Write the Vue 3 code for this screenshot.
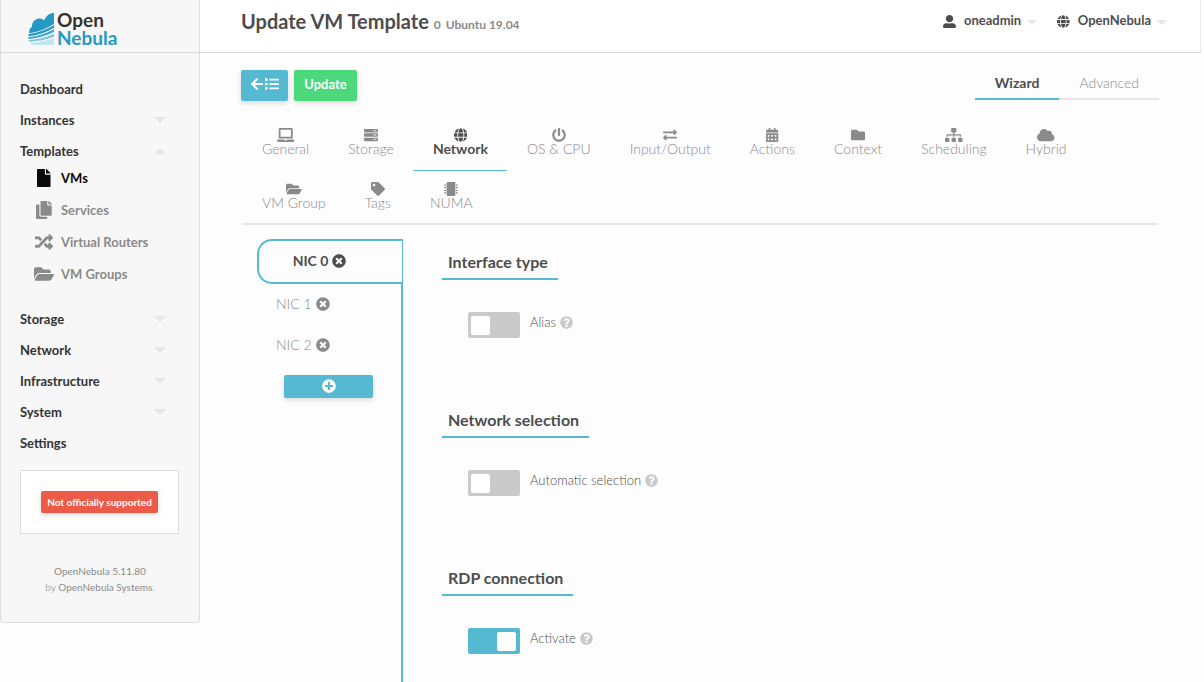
<script setup>
import { ref } from 'vue'

const icons = {
  file: [384, 'M224 136V0H24C10.7 0 0 10.7 0 24v464c0 13.3 10.7 24 24 24h336c13.3 0 24-10.7 24-24V160H248c-13.2 0-24-10.8-24-24zm160-14.1v6.1H256V0h6.1c6.4 0 12.5 2.5 17 7l97.9 98c4.5 4.5 7 10.6 7 16.9z'],
  copy: [448, 'M320 448v40c0 13.255-10.745 24-24 24H24c-13.255 0-24-10.745-24-24V120c0-13.255 10.745-24 24-24h72v296c0 30.879 25.121 56 56 56h168zm0-344V0H152c-13.255 0-24 10.745-24 24v368c0 13.255 10.745 24 24 24h272c13.255 0 24-10.745 24-24V128H344c-13.2 0-24-10.8-24-24zm120.971-31.029L375.029 7.029A24 24 0 0 0 358.059 0H352v96h96v-6.059a24 24 0 0 0-7.029-16.97z'],
  random: [512, 'M504.971 359.029c9.373 9.373 9.373 24.569 0 33.941l-80 79.984c-15.01 15.01-40.971 4.49-40.971-16.971V416h-58.785a12.004 12.004 0 0 1-8.773-3.812l-70.556-75.596 53.333-57.143L352 336h32v-39.981c0-21.438 25.943-31.998 40.971-16.971l80 79.981zM12 176h84l52.781 56.551 53.333-57.143-70.556-75.596A11.999 11.999 0 0 0 122.785 96H12c-6.627 0-12 5.373-12 12v56c0 6.627 5.373 12 12 12zm372 0v39.984c0 21.46 25.961 31.98 40.971 16.971l80-79.984c9.373-9.373 9.373-24.569 0-33.941l-80-79.981C409.943 24.021 384 34.582 384 56.019V96h-58.785a12.004 12.004 0 0 0-8.773 3.812L96 336H12c-6.627 0-12 5.373-12 12v56c0 6.627 5.373 12 12 12h110.785c3.326 0 6.503-1.381 8.773-3.812L352 176h32z'],
  folderOpen: [576, 'M572.694 292.093L500.27 416.248A63.997 63.997 0 0 1 444.989 448H45.025c-18.523 0-30.064-20.093-20.731-36.093l72.424-124.155A64 64 0 0 1 152 256h399.964c18.523 0 30.064 20.093 20.73 36.093zM152 224h328v-48c0-26.51-21.49-48-48-48H272l-64-64H48C21.49 64 0 85.49 0 112v278.046l69.077-118.418C86.214 242.25 117.989 224 152 224z'],
  user: [512, 'M256 288c79.5 0 144-64.5 144-144S335.5 0 256 0 112 64.5 112 144s64.5 144 144 144zm128 32h-55.1c-22.2 10.2-46.9 16-72.9 16s-50.6-5.8-72.9-16H128c-70.7 0-128 57.3-128 128v16c0 26.5 21.5 48 48 48h416c26.5 0 48-21.5 48-48v-16c0-70.7-57.3-128-128-128z'],
  globe: [496, 'M336.5 160C322 70.7 287.8 8 248 8s-74 62.7-88.5 152h177zM152 256c0 22.2 1.2 43.5 3.3 64h185.3c2.1-20.5 3.3-41.8 3.3-64s-1.2-43.5-3.3-64H155.3c-2.1 20.5-3.3 41.8-3.3 64zm324.7-96c-28.6-67.9-86.5-120.4-158-141.6 24.4 33.8 41.2 84.7 50 141.6h108zM177.2 18.4C105.8 39.6 47.8 92.1 19.3 160h108c8.7-56.9 25.5-107.8 49.9-141.6zM487.4 192H372.7c2.1 21 3.3 42.5 3.3 64s-1.2 43-3.3 64h114.6c5.5-20.5 8.6-41.8 8.6-64s-3.1-43.5-8.5-64zM120 256c0-21.5 1.2-43 3.3-64H8.6C3.2 212.5 0 233.8 0 256s3.2 43.5 8.6 64h114.6c-2-21-3.2-42.5-3.2-64zm39.5 96c14.5 89.3 48.7 152 88.5 152s74-62.7 88.5-152h-177zm159.3 141.6c71.4-21.2 129.4-73.7 158-141.6h-108c-8.8 56.9-25.6 107.8-50 141.6zM19.3 352c28.6 67.9 86.5 120.4 158 141.6-24.4-33.8-41.2-84.7-50-141.6h-108z'],
  laptop: [640, 'M624 416H381.54c-.74 19.81-14.71 32-32.74 32H288c-18.69 0-33.02-17.47-32.77-32H16c-8.8 0-16 7.2-16 16v16c0 35.2 28.8 64 64 64h512c35.2 0 64-28.8 64-64v-16c0-8.8-7.2-16-16-16zM576 48c0-26.4-21.6-48-48-48H112C85.6 0 64 21.6 64 48v336h512V48zm-64 272H128V64h384v256z'],
  server: [512, [0, 160, 320].map(y => `M480 ${160 + y}H32c-17.7 0-32-14.3-32-32v-64c0-17.7 14.3-32 32-32h448c17.7 0 32 14.3 32 32v64c0 17.7-14.3 32-32 32zm-48-88a24 24 0 1 0 0 48a24 24 0 1 0 0-48zm-64 0a24 24 0 1 0 0 48a24 24 0 1 0 0-48z`).join('')],
  power: [512, 'M400 54.1c63 45 104 118.6 104 201.9 0 136.8-110.8 247.7-247.5 248C120 504.3 8.2 393 8 256.4 7.9 173.1 48.9 99.3 111.8 54.2c11.7-8.3 28-4.8 35 7.7L162.6 90c5.9 10.5 3.1 23.8-6.6 31-41.5 30.8-68 79.6-68 134.9-.1 92.3 74.5 168.1 168 168.1 91.6 0 168.6-74.2 168-169.1-.3-51.8-24.7-101.8-68.1-134-9.7-7.2-12.4-20.5-6.5-30.9l15.8-28.1c7-12.4 23.2-16.1 34.8-7.8zM296 264V24c0-13.3-10.7-24-24-24h-32c-13.3 0-24 10.7-24 24v240c0 13.3 10.7 24 24 24h32c13.3 0 24-10.7 24-24z'],
  exchange: [512, 'M0 168v-16c0-13.255 10.745-24 24-24h360V80c0-21.367 25.899-32.042 40.971-16.971l80 80c9.372 9.373 9.372 24.569 0 33.941l-80 80C409.956 271.982 384 261.456 384 240v-48H24c-13.255 0-24-10.745-24-24zm488 152H128v-48c0-21.314-25.862-32.08-40.971-16.971l-80 80c-9.372 9.373-9.372 24.569 0 33.941l80 80C102.057 463.997 128 453.437 128 432v-48h360c13.255 0 24-10.745 24-24v-16c0-13.255-10.745-24-24-24z'],
  calendar: [448, 'M0 464c0 26.5 21.5 48 48 48h352c26.5 0 48-21.5 48-48V192H0zM400 64h-48V16c0-8.8-7.2-16-16-16h-32c-8.8 0-16 7.2-16 16v48H160V16c0-8.8-7.2-16-16-16h-32c-8.8 0-16 7.2-16 16v48H48C21.5 64 0 85.5 0 112v48h448v-48c0-26.5-21.5-48-48-48z' + [[64, 256], [192, 256], [320, 256], [64, 384], [192, 384], [320, 384]].map(([x, y]) => `M${x} ${y}h64v64h-64z`).join('')],
  folder: [512, 'M464 128H272l-64-64H48C21.49 64 0 85.49 0 112v288c0 26.51 21.49 48 48 48h416c26.51 0 48-21.49 48-48V176c0-26.51-21.49-48-48-48z'],
  sitemap: [640, 'M128 352H32c-17.67 0-32 14.33-32 32v96c0 17.67 14.33 32 32 32h96c17.67 0 32-14.33 32-32v-96c0-17.67-14.33-32-32-32zm-24-80h192v48h48v-48h192v48h48v-57.59c0-21.17-17.23-38.41-38.41-38.41H344v-64h40c17.67 0 32-14.33 32-32V32c0-17.67-14.33-32-32-32H256c-17.67 0-32 14.33-32 32v96c0 17.67 14.33 32 32 32h40v64H94.41C73.23 224 56 241.23 56 262.41V320h48v-48zm264 80h-96c-17.67 0-32 14.33-32 32v96c0 17.67 14.33 32 32 32h96c17.67 0 32-14.33 32-32v-96c0-17.67-14.33-32-32-32zm240 0h-96c-17.67 0-32 14.33-32 32v96c0 17.67 14.33 32 32 32h96c17.67 0 32-14.33 32-32v-96c0-17.67-14.33-32-32-32z'],
  cloud: [640, 'M537.6 226.6c4.1-10.7 6.4-22.4 6.4-34.6 0-53-43-96-96-96-19.7 0-38.1 6-53.3 16.2C367 64.2 315.3 32 256 32c-88.4 0-160 71.6-160 160 0 2.7.1 5.4.2 8.1C40.2 219.8 0 273.2 0 336c0 79.5 64.5 144 144 144h368c70.7 0 128-57.3 128-128 0-61.9-44-113.6-102.4-125.4z'],
  tag: [512, 'M0 252.118V48C0 21.49 21.49 0 48 0h204.118a48 48 0 0 1 33.941 14.059l211.882 211.882c18.745 18.745 18.745 49.137 0 67.882L293.823 497.941c-18.745 18.745-49.137 18.745-67.882 0L14.059 286.059A48 48 0 0 1 0 252.118zM112 64c-26.51 0-48 21.49-48 48s21.49 48 48 48 48-21.49 48-48-21.49-48-48-48z'],
  chip: [512, 'M416 48v416c0 26.51-21.49 48-48 48H144c-26.51 0-48-21.49-48-48V48c0-26.51 21.49-48 48-48h224c26.51 0 48 21.49 48 48z' + [88, 184, 280, 376].map(y => `M440 ${y}h48v12h24v24h-24v12h-48zM72 ${y}h-48v12h-24v24h24v12h48z`).join('')],
  times: [512, 'M256 8C119 8 8 119 8 256s111 248 248 248 248-111 248-248S393 8 256 8zm121.6 313.1c4.7 4.7 4.7 12.3 0 17L338 377.6c-4.7 4.7-12.3 4.7-17 0L256 312l-65.1 65.6c-4.7 4.7-12.3 4.7-17 0L134.4 338c-4.7-4.7-4.7-12.3 0-17l65.6-65-65.6-65.1c-4.7-4.7-4.7-12.3 0-17l39.6-39.6c4.7-4.7 12.3-4.7 17 0l65 65.7 65.1-65.6c4.7-4.7 12.3-4.7 17 0l39.6 39.6c4.7 4.7 4.7 12.3 0 17L312 256l65.6 65.1z'],
  plus: [512, 'M256 8C119 8 8 119 8 256s111 248 248 248 248-111 248-248S393 8 256 8zm144 276c0 6.6-5.4 12-12 12h-92v92c0 6.6-5.4 12-12 12h-56c-6.6 0-12-5.4-12-12v-92h-92c-6.6 0-12-5.4-12-12v-56c0-6.6 5.4-12 12-12h92v-92c0-6.6 5.4-12 12-12h56c6.6 0 12 5.4 12 12v92h92c6.6 0 12 5.4 12 12v56z'],
  question: [512, 'M504 256c0 136.997-111.043 248-248 248S8 392.997 8 256C8 119.083 119.043 8 256 8s248 111.083 248 248zM262.655 90c-54.497 0-89.255 22.957-116.549 63.758-3.536 5.286-2.353 12.415 2.715 16.258l34.699 26.31c5.205 3.947 12.621 3.008 16.665-2.122 17.864-22.658 30.113-35.797 57.303-35.797 20.429 0 45.698 13.148 45.698 32.958 0 14.976-12.363 22.667-32.534 33.976C247.128 238.528 216 254.941 216 296v4c0 6.627 5.373 12 12 12h56c6.627 0 12-5.373 12-12v-1.333c0-28.462 83.186-29.647 83.186-106.667 0-58.002-60.165-102-116.531-102zM256 338c-25.365 0-46 20.635-46 46 0 25.364 20.635 46 46 46s46-20.636 46-46c0-25.365-20.635-46-46-46z'],
  arrow: [448, 'M257.5 445.1l-22.2 22.2c-9.4 9.4-24.6 9.4-33.9 0L7 273c-9.4-9.4-9.4-24.6 0-33.9L201.4 44.7c9.4-9.4 24.6-9.4 33.9 0l22.2 22.2c9.5 9.5 9.3 25-.4 34.3L136.6 216H424c13.3 0 24 10.7 24 24v32c0 13.3-10.7 24-24 24H136.6l120.5 114.8c9.8 9.3 10 24.8.4 34.3z'],
  list: [512, [0, 160, 320].map(y => `M16 ${48 + y}h64a16 16 0 0 1 16 16v64a16 16 0 0 1-16 16h-64a16 16 0 0 1-16-16v-64a16 16 0 0 1 16-16zM176 ${64 + y}h320a16 16 0 0 1 16 16v32a16 16 0 0 1-16 16h-320a16 16 0 0 1-16-16v-32a16 16 0 0 1 16-16z`).join('')]
}

const viewBox = name => `0 0 ${icons[name][0]} 512`

const menu = [
  { label: 'Dashboard' },
  { label: 'Instances', arrow: 'down' },
  {
    label: 'Templates',
    arrow: 'up',
    children: [
      { label: 'VMs', icon: 'file', active: true },
      { label: 'Services', icon: 'copy' },
      { label: 'Virtual Routers', icon: 'random' },
      { label: 'VM Groups', icon: 'folderOpen' }
    ]
  },
  { label: 'Storage', arrow: 'down' },
  { label: 'Network', arrow: 'down' },
  { label: 'Infrastructure', arrow: 'down' },
  { label: 'System', arrow: 'down' },
  { label: 'Settings' }
]

const tabs = [
  ['General', 'laptop'], ['Storage', 'server'], ['Network', 'globe'], ['OS & CPU', 'power'],
  ['Input/Output', 'exchange'], ['Actions', 'calendar'], ['Context', 'folder'],
  ['Scheduling', 'sitemap'], ['Hybrid', 'cloud'], ['VM Group', 'folderOpen'],
  ['Tags', 'tag'], ['NUMA', 'chip']
]
const activeTab = ref('Network')
const nics = ['NIC 0', 'NIC 1', 'NIC 2']
const activeNic = ref('NIC 0')

const sections = ref([
  { title: 'Interface type', label: 'Alias', id: 'alias', on: false },
  { title: 'Network selection', label: 'Automatic selection', id: 'auto-selection', on: false },
  { title: 'RDP connection', label: 'Activate', id: 'rdp', on: true }
])
</script>

<template>
  <div class="page">
    <aside class="sidebar">
      <a class="logo" href="#">
        <svg class="logo-mark" viewBox="0 0 78 96" aria-hidden="true">
          <path fill="#2499c4" d="M78 0v32C56 47 30 57 4 61C2 50 8 43 12 42C10 23 31 8 49 22C55 6 66 0 78 0z" />
          <path fill="#2499c4" d="M78 36v8C54 59 28 67 1 70q0-4 2-7C30 59 56 50 78 36z" />
          <path fill="#41a7cd" d="M78 49v8C52 70 27 76 1 78V73C28 71 54 62 78 49z" />
          <path fill="#7dc6e0" d="M78 62v9C52 80 30 84 6 86q-4-2-5-5C27 80 52 74 78 62z" />
          <path fill="#c2e5f1" d="M78 76v20H18Q9 95 6 89C31 88 55 84 78 76z" />
        </svg>
        <span class="logo-text">Open<br><span class="logo-blue">Nebula</span></span>
      </a>
      <nav>
        <ul class="menu">
          <li v-for="item in menu" :key="item.label">
            <a class="menu-link" href="#">{{ item.label }}<i v-if="item.arrow" class="caret" :class="item.arrow"></i></a>
            <ul v-if="item.children" class="submenu">
              <li v-for="child in item.children" :key="child.label">
                <a class="sub-link" :class="{ active: child.active }" href="#">
                  <span class="sub-icon"><svg :viewBox="viewBox(child.icon)"><path :d="icons[child.icon][1]" /></svg></span>
                  {{ child.label }}
                </a>
              </li>
            </ul>
          </li>
        </ul>
      </nav>
      <div class="support"><span class="support-label">Not officially supported</span></div>
      <div class="footer">
        <div><a href="#">OpenNebula 5.11.80</a></div>
        <div>by <a href="#">OpenNebula Systems</a>.</div>
      </div>
    </aside>

    <div class="content">
      <header class="header">
        <h1>Update VM Template <small>0</small><small>Ubuntu 19.04</small></h1>
        <div class="header-menus">
          <button class="header-btn" type="button">
            <svg :viewBox="viewBox('user')"><path :d="icons.user[1]" /></svg><span>oneadmin</span><i class="caret small down"></i>
          </button>
          <button class="header-btn" type="button">
            <svg :viewBox="viewBox('globe')"><path :d="icons.globe[1]" /></svg><span>OpenNebula</span><i class="caret small down"></i>
          </button>
        </div>
      </header>

      <main class="main">
        <div class="toolbar">
          <div class="actions">
            <button class="btn back" type="button" aria-label="Back to list">
              <svg :viewBox="viewBox('arrow')"><path :d="icons.arrow[1]" /></svg>
              <svg :viewBox="viewBox('list')"><path :d="icons.list[1]" /></svg>
            </button>
            <button class="btn update" type="button">Update</button>
          </div>
          <div class="modes">
            <button class="mode active" type="button">Wizard</button>
            <button class="mode" type="button">Advanced</button>
          </div>
        </div>

        <div class="tabs">
          <button v-for="[label, icon] in tabs" :key="label" type="button" class="tab" :class="{ active: label === activeTab }" @click="activeTab = label">
            <svg :viewBox="viewBox(icon)"><path fill-rule="evenodd" :d="icons[icon][1]" /></svg>
            <span>{{ label }}</span>
          </button>
        </div>

        <div class="panel">
          <div class="nics">
            <div v-for="nic in nics" :key="nic" class="nic" :class="{ active: nic === activeNic }">
              <button type="button" class="nic-name" @click="activeNic = nic">{{ nic }}</button>
              <button type="button" class="nic-remove" :aria-label="'Remove ' + nic">
                <svg :viewBox="viewBox('times')"><path :d="icons.times[1]" /></svg>
              </button>
            </div>
            <button class="add" type="button" aria-label="Add NIC">
              <svg :viewBox="viewBox('plus')"><path :d="icons.plus[1]" /></svg>
            </button>
          </div>
          <div class="form">
            <section v-for="section in sections" :key="section.id" class="section">
              <h2>{{ section.title }}</h2>
              <div class="field">
                <input :id="section.id" v-model="section.on" class="switch" type="checkbox">
                <label :for="section.id">{{ section.label }}</label>
                <svg class="help" :viewBox="viewBox('question')"><path fill-rule="evenodd" :d="icons.question[1]" /></svg>
              </div>
            </section>
          </div>
        </div>
      </main>
    </div>
  </div>
</template>

<style>
body {
  background: #fdfdfd;
  overflow: hidden;
}
</style>

<style scoped>
* {
  box-sizing: border-box;
}
.page {
  display: flex;
  align-items: flex-start;
  height: 100vh;
  overflow: hidden;
  padding-right: 3px;
  font-family: Lato, "Open Sans", sans-serif;
  font-size: 14px;
  color: #4d4d4d;
}
button {
  border: 0;
  padding: 0;
  background: none;
  font: inherit;
  color: inherit;
  cursor: pointer;
}
a {
  color: inherit;
  text-decoration: none;
}
svg {
  display: block;
  fill: currentColor;
  height: 14px;
}
ul {
  list-style: none;
  margin: 0;
  padding: 0;
}

.sidebar {
  flex: none;
  width: 200px;
  border: 1px solid #dedede;
  border-top: 0;
  border-radius: 0 0 4px 4px;
  background: #f7f7f7;
}
.logo {
  display: flex;
  align-items: center;
  gap: 3px;
  height: 53px;
  padding: 6px 0 0 27px;
  border-bottom: 1px solid #d8d8d8;
}
.logo-mark {
  width: 26px;
  height: 32px;
}
.logo-text {
  font-size: 19px;
  font-weight: 700;
  line-height: 18px;
  color: #333;
}
.logo-blue {
  color: #2499c4;
}
.menu {
  padding: 20px 20px 0 19px;
}
.menu-link {
  display: flex;
  align-items: center;
  justify-content: space-between;
  height: 31px;
  padding-right: 13px;
  font-size: 13px;
  font-weight: 700;
  color: #333;
}
.caret {
  border: 6px solid transparent;
  border-bottom-width: 0;
  border-top-color: #e6e6e6;
}
.caret.up {
  border-bottom: 6px solid #e6e6e6;
  border-top: 0;
}
.caret.small {
  border-width: 5px 5px 0;
  margin: 2px 0 0 6px;
}
.submenu {
  margin-top: -4px;
  padding-bottom: 13px;
}
.sub-link {
  display: flex;
  align-items: center;
  gap: 7px;
  height: 32px;
  padding-left: 14px;
  font-size: 13px;
  font-weight: 700;
  color: #8a8a8a;
}
.sub-icon {
  display: flex;
  justify-content: center;
  width: 20px;
}
.sub-icon svg {
  height: 18px;
}
.sub-link.active {
  color: #0a0a0a;
}
.support {
  display: flex;
  justify-content: center;
  margin: 12px 20px 0 19px;
  padding: 20px 0;
  border: 1px solid #dedede;
  background: #fff;
}
.support-label {
  padding: 0 6px;
  border-radius: 2px;
  background: #ec5b48;
  box-shadow: 0 2px 5px rgba(0, 0, 0, 0.15);
  font-size: 10px;
  font-weight: 700;
  line-height: 22px;
  color: #fff;
}
.footer {
  padding: 29px 0 27px;
  text-align: center;
  font-size: 10px;
  line-height: 16px;
  color: #b0b0b0;
}
.footer a {
  color: #8a8a8a;
}

.content {
  flex: 1;
  min-width: 0;
}
.header {
  display: flex;
  justify-content: space-between;
  height: 53px;
  padding: 0 33px 0 41px;
  border-bottom: 1px solid #d8d8d8;
  border-right: 1px solid #eee;
  background: #fff;
}
h1 {
  margin: 0;
  font-size: 20px;
  font-weight: 700;
  line-height: 42px;
}
h1 small {
  margin-right: 5px;
  font-size: 12px;
  color: #8a8a8a;
}
.header-menus {
  display: flex;
  gap: 20px;
  height: 42px;
}
.header-btn {
  display: flex;
  align-items: center;
  font-size: 13px;
  font-weight: 700;
}
.header-btn svg {
  height: 13px;
  margin-right: 8px;
}
.header-btn span {
  padding-bottom: 2px;
}

.main {
  padding: 17px 42px 0 41px;
}
.toolbar {
  display: flex;
  justify-content: space-between;
}
.actions {
  display: flex;
  gap: 6px;
}
.btn {
  display: flex;
  align-items: center;
  height: 31px;
  border-radius: 2px;
  box-shadow: 0 2px 5px rgba(0, 0, 0, 0.15);
  font-size: 13px;
  font-weight: 700;
  color: #fff;
}
.btn.back {
  gap: 2px;
  padding: 0 9px 3px 10px;
  background: #55bad1;
}
.btn.update {
  padding: 0 10px 3px;
  background: #4cd97b;
}
.modes {
  display: flex;
}
.mode {
  height: 30px;
  padding: 0 20px 4px;
  border-bottom: 2px solid #e6e6e6;
  font-weight: 300;
  color: #8a8a8a;
}
.mode.active {
  border-color: #55bad1;
  font-weight: 700;
  color: #4d4d4d;
}

.tabs {
  display: flex;
  flex-wrap: wrap;
  margin-top: 16px;
  padding-left: 1px;
}
.tab {
  display: flex;
  flex-direction: column;
  align-items: center;
  height: 54px;
  padding: 11px 19px 0 20px;
  border-bottom: 1px solid transparent;
  font-weight: 300;
  line-height: 14px;
  color: #8a8a8a;
}
.tab.active {
  border-bottom: 1px solid #55bad1;
  font-weight: 700;
  color: #4d4d4d;
}

.panel {
  display: flex;
  align-items: flex-start;
  margin: -2px 1px 0;
  padding: 14px 0 0 15px;
  border-top: 2px solid #e6e6e6;
}
.nics {
  flex: none;
  display: flex;
  flex-direction: column;
  width: 146px;
  min-height: 460px;
  border-right: 2px solid #55bad1;
}
.nic {
  display: flex;
  align-items: center;
  gap: 4px;
  height: 41px;
  padding: 0 0 2px 19px;
  font-weight: 300;
  color: #8a8a8a;
}
.nic.active {
  justify-content: center;
  height: 45px;
  margin-right: -1px;
  padding: 0 22px 2px 0;
  border: 2px solid #55bad1;
  border-right: 0;
  border-radius: 15px 0 0 15px;
  background: #fdfdfd;
  font-weight: 700;
  color: #4d4d4d;
}
.add {
  display: flex;
  align-items: center;
  justify-content: center;
  height: 23px;
  margin: 9px 28px 0 27px;
  padding-bottom: 2px;
  border-radius: 2px;
  background: #55bad1;
  box-shadow: 0 2px 5px rgba(0, 0, 0, 0.15);
  color: #fff;
}
.add svg {
  height: 14px;
}
.form {
  flex: 1;
  padding-left: 39px;
}
.section {
  height: 158px;
  padding-top: 7px;
}
h2 {
  width: fit-content;
  margin: 0;
  padding: 0 10px 0 6px;
  border-bottom: 2px solid #55bad1;
  font-size: 16px;
  font-weight: 700;
  line-height: 32px;
}
.field {
  display: flex;
  gap: 4px;
  margin: 32px 0 0 26px;
  font-size: 13px;
  font-weight: 300;
  line-height: 20px;
}
.field label {
  margin-left: 6px;
}
.switch {
  appearance: none;
  width: 52px;
  height: 26px;
  margin: 0;
  padding: 4px 4px 3px 3px;
  border-radius: 2px;
  background: #cacaca;
  cursor: pointer;
}
.switch::before {
  content: "";
  display: block;
  width: 19px;
  height: 19px;
  border-radius: 2px;
  background: #fff;
}
.switch:checked {
  background: #55bad1;
}
.switch:checked::before {
  margin-left: auto;
}
.help {
  height: 13px;
  margin-top: 4px;
  color: #cacaca;
}
</style>
